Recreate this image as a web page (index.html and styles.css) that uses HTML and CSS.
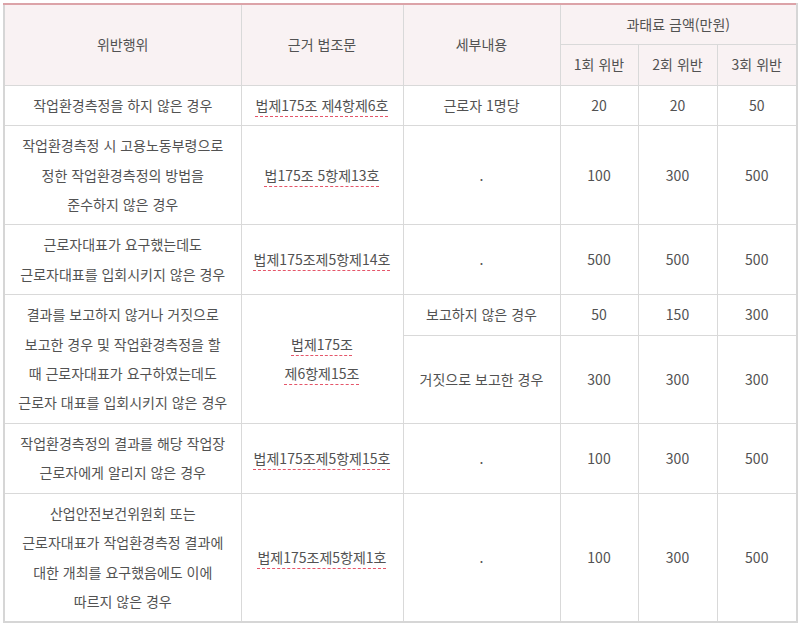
FILE: index.html
```html
<!DOCTYPE html>
<html lang="ko">
<head>
<meta charset="utf-8">
<title>과태료 금액</title>
<link rel="stylesheet" href="styles.css">
</head>
<body>
<div class="wrap">
<table class="fine">
  <colgroup>
    <col class="c1"><col class="c2"><col class="c3"><col class="c4"><col class="c5"><col class="c6">
  </colgroup>
  <thead>
    <tr class="h1">
      <th rowspan="2">위반행위</th>
      <th rowspan="2">근거 법조문</th>
      <th rowspan="2">세부내용</th>
      <th colspan="3">과태료 금액(만원)</th>
    </tr>
    <tr class="h2">
      <th>1회 위반</th>
      <th>2회 위반</th>
      <th>3회 위반</th>
    </tr>
  </thead>
  <tbody>
    <tr>
      <td>작업환경측정을 하지 않은 경우</td>
      <td><span class="law">법제175조 제4항제6호</span></td>
      <td>근로자 1명당</td>
      <td>20</td><td>20</td><td>50</td>
    </tr>
    <tr>
      <td>작업환경측정 시 고용노동부령으로<br>정한 작업환경측정의 방법을<br>준수하지 않은 경우</td>
      <td><span class="law">법175조 5항제13호</span></td>
      <td>.</td>
      <td>100</td><td>300</td><td>500</td>
    </tr>
    <tr>
      <td>근로자대표가 요구했는데도<br>근로자대표를 입회시키지 않은 경우</td>
      <td><span class="law">법제175조제5항제14호</span></td>
      <td>.</td>
      <td>500</td><td>500</td><td>500</td>
    </tr>
    <tr class="r-short">
      <td rowspan="2">결과를 보고하지 않거나 거짓으로<br>보고한 경우 및 작업환경측정을 할<br>때 근로자대표가 요구하였는데도<br>근로자 대표를 입회시키지 않은 경우</td>
      <td rowspan="2"><span class="law">법제175조</span><br><span class="law">제6항제15조</span></td>
      <td class="short">보고하지 않은 경우</td>
      <td class="short">50</td><td class="short">150</td><td class="short">300</td>
    </tr>
    <tr class="r-long">
      <td class="long">거짓으로 보고한 경우</td>
      <td class="long">300</td><td class="long">300</td><td class="long">300</td>
    </tr>
    <tr>
      <td>작업환경측정의 결과를 해당 작업장<br>근로자에게 알리지 않은 경우</td>
      <td><span class="law">법제175조제5항제15호</span></td>
      <td>.</td>
      <td>100</td><td>300</td><td>500</td>
    </tr>
    <tr>
      <td>산업안전보건위원회 또는<br>근로자대표가 작업환경측정 결과에<br>대한 개최를 요구했음에도 이에<br>따르지 않은 경우</td>
      <td><span class="law">법제175조제5항제1호</span></td>
      <td>.</td>
      <td>100</td><td>300</td><td>500</td>
    </tr>
  </tbody>
</table>
</div>
</body>
</html>
```

FILE: styles.css
```css
html, body {
  margin: 0;
  padding: 0;
  background: #ffffff;
}
.wrap {
  padding: 3px 4px 0 3px;
}
.fine {
  width: 793px;
  table-layout: fixed;
  border-collapse: collapse;
  font-family: "Noto Sans CJK KR", "Noto Sans", sans-serif;
  font-size: 14px;
  color: #525252;
  border-left: 2px solid #d6d6d6;
  border-right: 2px solid #d6d6d6;
  border-bottom: 2px solid #d6d6d6;
  border-top: 2px solid #dca3a8;
}
.c1 { width: 237px; }
.c2 { width: 162px; }
.c3 { width: 157px; }
.c4 { width: 78px; }
.c5 { width: 79px; }
.c6 { width: 80px; }
.fine th,
.fine td {
  border: 1px solid #d9d9d9;
  text-align: center;
  vertical-align: middle;
  font-weight: 400;
  padding: 5px 0;
  line-height: 29.4px;
}
.fine th {
  background: #f9f2f3;
  height: 29px;
}
.fine td.short {
  height: 29px;
}
.fine td.long {
  height: 76px;
}
.law {
  text-decoration-line: underline;
  text-decoration-style: dashed;
  text-decoration-color: #e5566a;
  text-decoration-thickness: 1px;
  text-underline-offset: 5px;
}
```
